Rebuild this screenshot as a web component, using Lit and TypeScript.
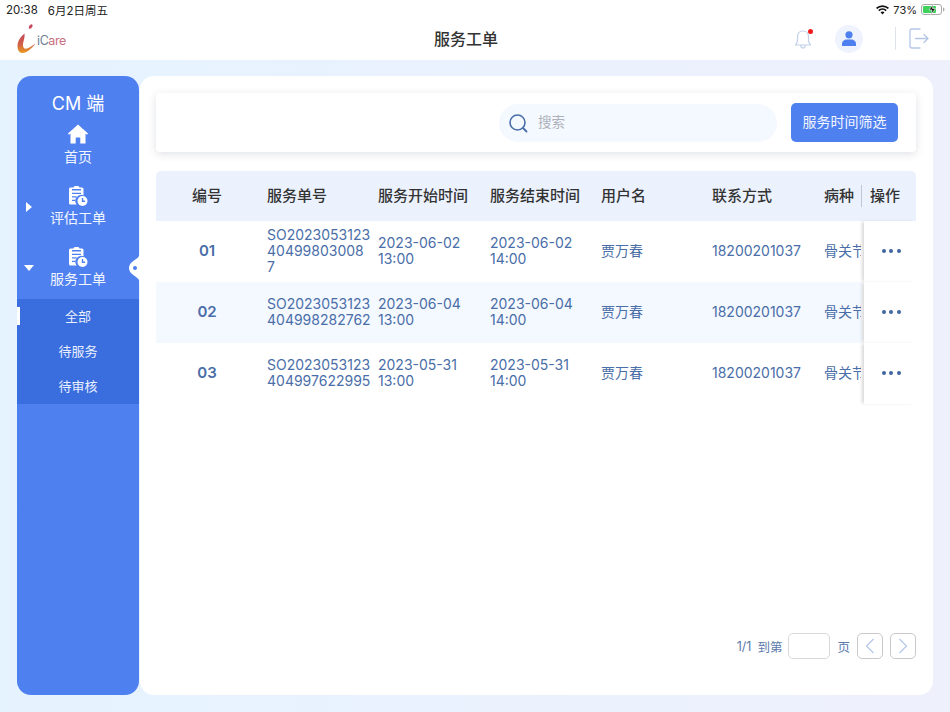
import { LitElement, html, css, svg } from "lit";
import { customElement } from "lit/decorators.js";

const clip = svg`<svg class="ic" width="22" height="22" viewBox="0 0 22 22"><path fill="#fff" fill-rule="evenodd" d="M8 0h3a1.600 1.600 0 0 1 1.500 1.500H15a1.500 1.500 0 0 1 1.500 1.500v6.200a6 6 0 0 0-6.900 9.300H3.500A1.500 1.500 0 0 1 2 17V3a1.500 1.500 0 0 1 1.500-1.500H6.500A1.600 1.600 0 0 1 8 0ZM5 4.500h9V3H5ZM5 8h9V6.800H5Zm0 3.500h4.500v-1.200H5Zm0 3.500h3v-1.200H5Z"/><circle cx="15.500" cy="15" r="5" fill="#fff"/><path d="M15.500 12v3.200h2.600" fill="none" stroke="#4f80ef" stroke-width="1.400"/></svg>`;

const rows = [
  { no: "01", id: ["SO2023053123", "40499803008", "7"], s: "2023-06-02", e: "2023-06-02" },
  { no: "02", id: ["SO2023053123", "404998282762"], s: "2023-06-04", e: "2023-06-04" },
  { no: "03", id: ["SO2023053123", "404997622995"], s: "2023-05-31", e: "2023-05-31" },
];

@customElement("app-root")
export class AppRoot extends LitElement {
  static styles = css`
    :host { display: block; width: 950px; height: 712px; overflow: hidden; font-family: Inter, "Noto Sans CJK SC", sans-serif; background: linear-gradient(90deg, #e5f3ff, #eef0fc); color: #4a6ea8; }
    * { box-sizing: border-box; }
    .top { height: 60px; background: #fff; display: flex; flex-direction: column; }
    .status { height: 18px; display: flex; align-items: center; padding: 1px 5px 0 6px; font-size: 11.500px; color: #222; }
    .status .date { margin-left: 10px; }
    .status .right { margin-left: auto; display: flex; align-items: center; gap: 4px; font-size: 11px; }
    .head { flex: 1; display: flex; align-items: center; padding: 0 21px 1px 17px; }
    .logo { display: flex; align-items: center; width: 417px; }
    .logoText { font-size: 12.500px; letter-spacing: -.4px; color: #c96f7d; margin-left: 1px; margin-top: 4px; }
    .logoText b { font-weight: 400; color: #6d8094; }
    h1 { margin: 0; width: 68px; font-size: 16px; font-weight: 500; color: #333; white-space: nowrap; line-height: 24px; }
    .tools { margin-left: auto; display: flex; align-items: center; }
    .avatar { width: 28px; height: 28px; border-radius: 50%; background: #eef3fe; display: flex; align-items: center; justify-content: center; margin: 0 32px 0 21px; }
    .vr { width: 1px; height: 23px; background: #dfe3ea; margin-right: 13px; }
    .body { display: flex; padding: 16px 17px 17px; height: 652px; }
    .side { width: 122px; flex: none; background: #4f80ef; color: #f2f6ff; position: relative; display: flex; flex-direction: column; align-items: center; border-radius: 14px; }
    .cm { font-size: 18px; line-height: 24px; margin-top: 16px; color: #fff; }
    .nav { display: flex; flex-direction: column; align-items: center; height: 61px; position: relative; width: 100%; font-size: 14px; line-height: 20px; flex: none; }
    .nav.home { padding-top: 8px; height: 70px; }
    .nav.last { height: 52px; }
    .homeic { display: block; margin-bottom: 3px; }
    .ic { display: block; }
    .arrow { position: absolute; left: 9px; top: 16px; width: 0; height: 0; border-top: 5px solid transparent; border-bottom: 5px solid transparent; border-left: 6px solid #fff; }
    .arrow.down { left: 7px; top: 18px; border: 0; border-left: 5.500px solid transparent; border-right: 5.500px solid transparent; border-top: 6px solid #fff; }
    .sub { width: 100%; background: #3a6ddd; height: 105px; display: flex; flex-direction: column; font-size: 13px; color: #e8effe; flex: none; }
    .sub div { height: 35px; display: flex; align-items: center; justify-content: center; position: relative; padding-bottom: 2px; }
    .sub .on::before { content: ""; position: absolute; left: 0; top: 8px; width: 3px; height: 18px; background: #fff; }
    .notch { position: absolute; right: -1px; top: 178px; }
    .main { flex: 1; background: #fff; border-radius: 14px; margin-left: 1px; padding: 17px 17px 36px 16px; display: flex; flex-direction: column; min-width: 0; }
    .searchCard { height: 59px; border-radius: 4px; background: #fff; box-shadow: 0 2px 9px rgba(60, 70, 100, .16); display: flex; align-items: center; justify-content: flex-end; padding: 0 18px 0 0; flex: none; }
    .search { width: 278px; height: 38px; background: #f4f8ff; border-radius: 19px; display: flex; align-items: center; padding-left: 9px; gap: 10px; margin-right: 14px; font-size: 13.500px; color: #adb1b8; }
    .search span { padding-bottom: 3px; }
    .btn { width: 107px; height: 39px; background: #4f80ef; color: #f2f6ff; border-radius: 5px; display: flex; align-items: center; justify-content: center; font-size: 14px; padding-bottom: 3px; }
    .table { margin-top: 19px; flex: 1; }
    .row { display: grid; grid-template-columns: 102px 111px 112px 111px 111px 112px 46px 55px; height: 61px; align-items: center; font-size: 14px; line-height: 16px; padding-bottom: 1px; }
    .row.alt { background: linear-gradient(90deg, #f4f8ff 706px, transparent 706px); }
    .row .num { text-align: center; font-weight: 600; font-size: 15px; color: #4a6ea8; }
    .cell { padding-left: 9px; white-space: nowrap; }
    .hrow { height: 50px; padding-bottom: 0; background: #ebf2fe; border-radius: 5px 5px 0 0; color: #333; font-weight: 500; font-size: 15px; line-height: 20px; }
    .hrow .num { font-weight: 500; color: #333; }
    .hrow .bar { border-left: 1px solid #c3c8d0; height: 22px; display: flex; align-items: center; padding-left: 8px; white-space: nowrap; }
    .clipcell { overflow: hidden; white-space: nowrap; padding-left: 9px; display: flex; align-items: center; }
    .ops { height: calc(100% + 1px); margin-bottom: -1px; background: #fff; box-shadow: -3px 0 3px -1px rgba(60, 60, 70, .2); margin-left: 3px; display: flex; align-items: center; justify-content: center; gap: 3.500px; padding: 0 0 1px 2px; }
    .ops i { width: 4px; height: 4px; border-radius: 50%; background: #41669f; }
    .pager { display: flex; align-items: center; justify-content: flex-end; font-size: 12.500px; color: #5b79aa; height: 26px; flex: none; }
    .pager .frac { margin-right: 6px; }
    .pager .inp { width: 42px; height: 26px; border: 1px solid #d9d9d9; border-radius: 5px; margin: 0 7px 0 6px; }
    .pager .pg { width: 26px; height: 26px; border: 1px solid #c9c9c9; border-radius: 5px; display: flex; align-items: center; justify-content: center; margin-left: 7px; }
  `;

  render() {
    return html`
      <div class="top">
        <div class="status">
          <span>20:38</span><span class="date">6月2日周五</span>
          <span class="right">
            <svg width="13" height="10" viewBox="0 0 13 10"><path d="M6.500 9.500 4.500 7.300a3 3 0 0 1 4 0ZM3.400 6.200 2.200 5a6.300 6.300 0 0 1 8.600 0L9.600 6.200a4.600 4.600 0 0 0-6.200 0ZM1.200 4 0 2.800a9.400 9.400 0 0 1 13 0L11.800 4a7.800 7.800 0 0 0-10.600 0Z" fill="#111"/></svg>
            <span>73%</span>
            <svg width="24" height="11" viewBox="0 0 24 11"><rect x=".5" y=".5" width="20" height="10" rx="2.500" fill="#fff" stroke="#aaa"/><rect x="2" y="2" width="13" height="7" rx="1" fill="#3ed15b"/><path d="M22 3.500c1 .3 1.500 1 1.500 2s-.5 1.700-1.500 2Z" fill="#aaa"/><path d="M12 .5 8 6h3l-1 4.500L14.500 4.500h-3Z" fill="#111" stroke="#fff" stroke-width=".6"/></svg>
          </span>
        </div>
        <div class="head">
          <div class="logo">
            <svg width="19" height="32" viewBox="0 0 19 32">
              <defs><linearGradient id="lg" x1="0" y1="0" x2="0" y2="1"><stop offset="0" stop-color="#c4455a"/><stop offset=".55" stop-color="#d2604a"/><stop offset="1" stop-color="#ea9a1f"/></linearGradient></defs>
              <path d="M12 3.500c.6-1.400 2-2.500 3-2.100 1 .5.700 1.900-.2 3-.8 1-2 1.700-2.700 1.200-.5-.3-.4-1.200-.1-2.100Z" fill="#c84b60"/>
              <path d="M7.500 10.500C4 13.500.5 17.500.500 23c0 4 1.800 7 4.800 7 4.700 0 9.700-5 13.200-9.500-3.500 2.500-7 5.200-9.800 5.200-2 0-2.700-1.700-2.700-3.700 0-3.500 2-6.500 1.500-11.500Z" fill="url(#lg)"/>
            </svg>
            <span class="logoText"><b>iC</b>are</span>
          </div>
          <h1>服务工单</h1>
          <div class="tools">
            <svg width="20" height="22" viewBox="0 0 20 22"><path d="M9 3c-3.500 0-5.500 2.600-5.500 6v4.500L1.500 17h15l-2-3.500V9c0-3.400-2-6-5.500-6Zm-2.200 14.500c0 1.400 1 2.500 2.200 2.500s2.200-1.100 2.200-2.500" fill="none" stroke="#c1cfe9" stroke-width="1.200" stroke-linejoin="round"/><circle cx="16.500" cy="3.500" r="2.500" fill="#f21b1b"/></svg>
            <div class="avatar">
              <svg width="14" height="15" viewBox="0 0 14 15"><circle cx="7" cy="3.800" r="3.600" fill="#4f80ef"/><path d="M0 15v-2.200C0 10.200 2.500 8.500 4.500 8.500h5c2 0 4.500 1.700 4.500 4.300V15Z" fill="#4f80ef"/></svg>
            </div>
            <div class="vr"></div>
            <svg width="20" height="21" viewBox="0 0 20 21"><path d="M11 1H3a2 2 0 0 0-2 2v15a2 2 0 0 0 2 2h8M6.500 10.500h12.500M15 6.500l4 4-4 4" fill="none" stroke="#b4c6e8" stroke-width="1.300" stroke-linecap="round" stroke-linejoin="round"/></svg>
          </div>
        </div>
      </div>
      <div class="body">
        <aside class="side">
          <div class="cm">CM 端</div>
          <div class="nav home">
            <svg class="homeic" width="20" height="20" viewBox="0 0 20 20"><path d="M10 .5 0 9.500l1 1.200 1.500-1.200V19.500h5.200v-6h4.600v6h5.200V9.500l1.500 1.200 1-1.200Z" fill="#fff"/></svg>
            <span>首页</span>
          </div>
          <div class="nav"><i class="arrow"></i>${clip}<span>评估工单</span></div>
          <div class="nav last"><i class="arrow down"></i>${clip}<span>服务工单</span></div>
          <div class="sub">
            <div class="on">全部</div><div>待服务</div><div>待审核</div>
          </div>
          <svg class="notch" width="11" height="28" viewBox="0 0 11 28"><path d="M11 0C10 3 8 4.500 5 6.500 1.500 9 0 11 0 14s1.500 5 5 7.500c3 2 5 3.500 6 6.500Z" fill="#fff"/><circle cx="6" cy="14" r="2" fill="#4f80ef"/></svg>
        </aside>
        <main class="main">
          <div class="searchCard">
            <div class="search">
              <svg width="20" height="20" viewBox="0 0 20 20"><circle cx="9.500" cy="9.500" r="7.500" fill="none" stroke="#4a6ea8" stroke-width="1.600"/><path d="m15 15 3.500 3.500" stroke="#4a6ea8" stroke-width="1.800" stroke-linecap="round"/></svg>
              <span>搜索</span>
            </div>
            <div class="btn">服务时间筛选</div>
          </div>
          <div class="table">
            <div class="row hrow">
              <div class="num">编号</div><div class="cell">服务单号</div><div class="cell">服务开始时间</div><div class="cell">服务结束时间</div><div class="cell">用户名</div><div class="cell">联系方式</div><div class="cell">病种</div><div class="bar">操作</div>
            </div>
            ${rows.map((r, i) => html`
              <div class="row ${i === 1 ? "alt" : ""}">
                <div class="num">${r.no}</div>
                <div class="cell">${r.id.map((l) => html`<div>${l}</div>`)}</div>
                <div class="cell">${r.s}<br />13:00</div>
                <div class="cell">${r.e}<br />14:00</div>
                <div class="cell">贾万春</div>
                <div class="cell">18200201037</div>
                <div class="clipcell">骨关节炎</div>
                <div class="ops"><i></i><i></i><i></i></div>
              </div>`)}
          </div>
          <div class="pager">
            <span class="frac">1/1</span><span>到第</span><div class="inp"></div><span>页</span>
            <div class="pg"><svg width="10" height="16" viewBox="0 0 10 16"><path d="M8.500 1 1.500 8l7 7" fill="none" stroke="#b4c6e8" stroke-width="1.200"/></svg></div>
            <div class="pg"><svg width="10" height="16" viewBox="0 0 10 16"><path d="m1.500 1 7 7-7 7" fill="none" stroke="#b4c6e8" stroke-width="1.200"/></svg></div>
          </div>
        </main>
      </div>
    `;
  }
}
